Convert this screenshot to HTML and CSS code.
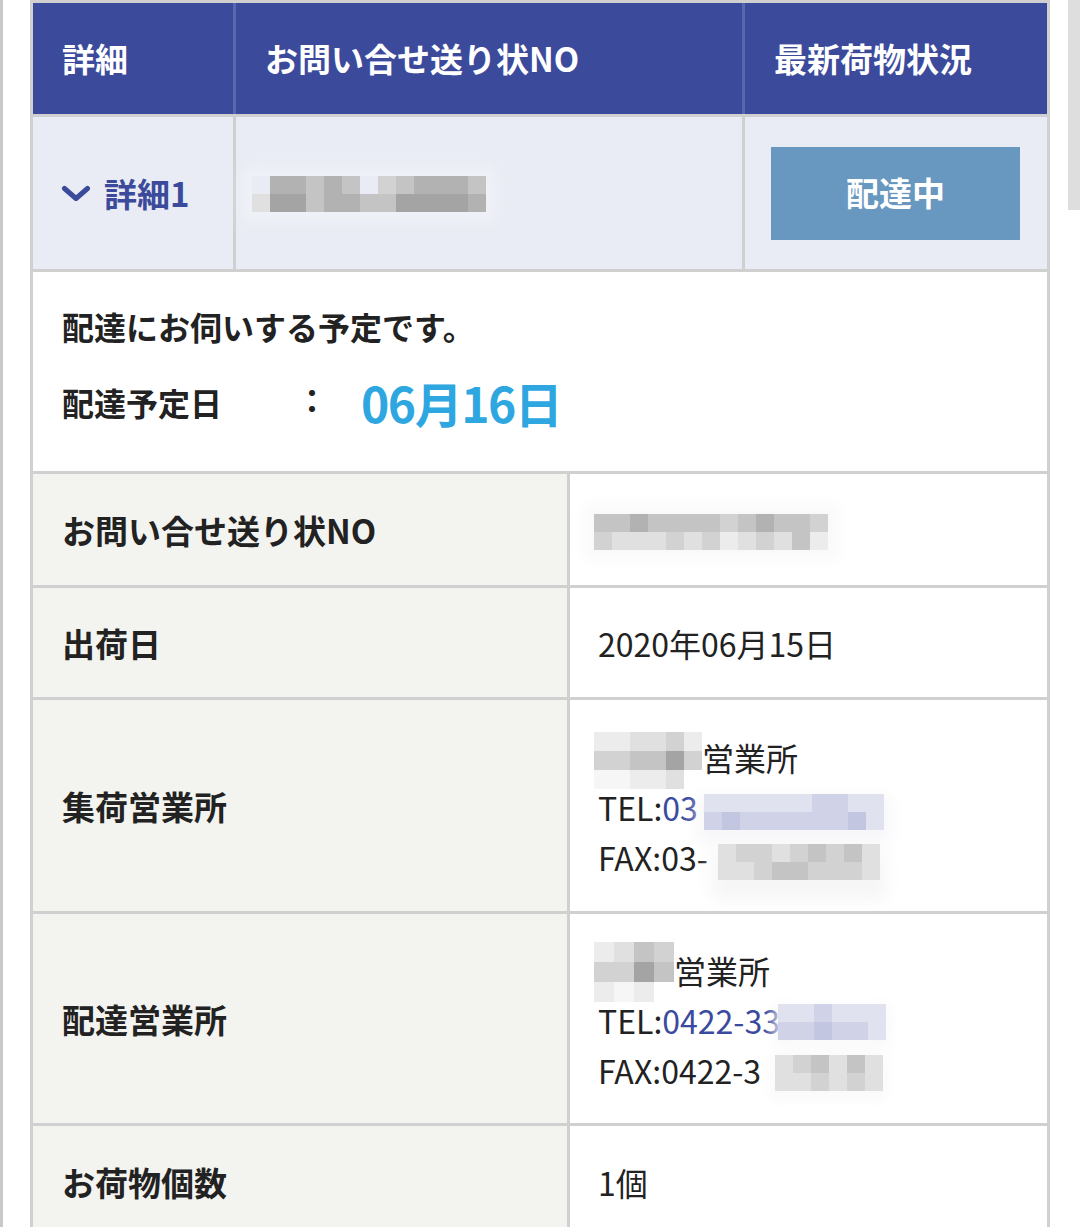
FILE: index.html
```html
<!DOCTYPE html>
<html lang="ja">
<head>
<meta charset="utf-8">
<title>お問い合せ</title>
<link rel="stylesheet" href="styles.css">
</head>
<body>
<div class="frame">
  <div class="sheet">
    <div class="head-row">
      <div class="th">詳細</div>
      <div class="th">お問い合せ送り状NO</div>
      <div class="th">最新荷物状況</div>
    </div>
    <div class="sum-row">
      <div class="td toggle">
        <svg class="chev" width="30" height="18" viewBox="0 0 30 18"><path d="M3.5 3.5 L15 13.5 L26.5 3.5" fill="none" stroke="#3c4a9c" stroke-width="5" stroke-linecap="round" stroke-linejoin="round"/></svg>
        <span class="toggle-label">詳細1</span>
      </div>
      <div class="td">
        <span class="mz mz-a">
          <i class="x"></i><i class="k3"></i><i class="k3"></i><i class="k4"></i><i class="k3"></i><i class="k4"></i><i class="x"></i><i class="k5"></i><i class="k4"></i><i class="k3"></i><i class="k3"></i><i class="k3"></i><i class="k4"></i>
          <i class="k6"></i><i class="k2"></i><i class="k2"></i><i class="k4"></i><i class="k3"></i><i class="k3"></i><i class="k4"></i><i class="k4"></i><i class="k2"></i><i class="k2"></i><i class="k2"></i><i class="k2"></i><i class="k3"></i>
        </span>
      </div>
      <div class="td status">
        <span class="badge">配達中</span>
      </div>
    </div>
    <div class="notice">
      <p class="notice-line">配達にお伺いする予定です。</p>
      <div class="eta">
        <span class="eta-label">配達予定日</span>
        <span class="eta-colon">：</span>
        <span class="eta-date">06月16日</span>
      </div>
    </div>
    <div class="d-row h111">
      <div class="lbl">お問い合せ送り状NO</div>
      <div class="val">
        <span class="mz mz-b">
          <i class="k4"></i><i class="k4"></i><i class="k3"></i><i class="k4"></i><i class="k4"></i><i class="k4"></i><i class="k4"></i><i class="k5"></i><i class="k4"></i><i class="k3"></i><i class="k4"></i><i class="k4"></i><i class="k5"></i>
          <i class="k5"></i><i class="k6"></i><i class="k6"></i><i class="k6"></i><i class="k5"></i><i class="k6"></i><i class="k5"></i><i class="k7"></i><i class="k6"></i><i class="k5"></i><i class="k6"></i><i class="k4"></i><i class="k7"></i>
        </span>
      </div>
    </div>
    <div class="d-row h109">
      <div class="lbl">出荷日</div>
      <div class="val">2020年06月15日</div>
    </div>
    <div class="d-row h211">
      <div class="lbl">集荷営業所</div>
      <div class="val lines">
        <div class="line"><span class="mz mz-c">
          <i class="k7"></i><i class="k7"></i><i class="k6"></i><i class="k6"></i><i class="k5"></i><i class="k7"></i>
          <i class="k5"></i><i class="k5"></i><i class="k4"></i><i class="k4"></i><i class="k2"></i><i class="k5"></i>
          <i class="k8"></i><i class="k8"></i><i class="k7"></i><i class="k7"></i><i class="k6"></i><i class="x"></i>
        </span>営業所</div>
        <div class="line">TEL:<a class="tel">03</a><span class="mz mz-d">
          <i class="b3"></i><i class="b3"></i><i class="b3"></i><i class="b3"></i><i class="b3"></i><i class="b3"></i><i class="b2"></i><i class="b2"></i><i class="b3"></i><i class="b3"></i>
          <i class="b2"></i><i class="b1"></i><i class="b2"></i><i class="b2"></i><i class="b2"></i><i class="b2"></i><i class="b2"></i><i class="b2"></i><i class="b1"></i><i class="b3"></i>
        </span></div>
        <div class="line">FAX:03-<span class="mz mz-e">
          <i class="k6"></i><i class="k5"></i><i class="k5"></i><i class="k6"></i><i class="k5"></i><i class="k4"></i><i class="k5"></i><i class="k4"></i><i class="k6"></i>
          <i class="k6"></i><i class="k6"></i><i class="k5"></i><i class="k4"></i><i class="k4"></i><i class="k5"></i><i class="k5"></i><i class="k5"></i><i class="k6"></i>
        </span></div>
      </div>
    </div>
    <div class="d-row h209">
      <div class="lbl">配達営業所</div>
      <div class="val lines">
        <div class="line"><span class="mz mz-f">
          <i class="k7"></i><i class="k6"></i><i class="k4"></i><i class="k5"></i>
          <i class="k5"></i><i class="k5"></i><i class="k2"></i><i class="k4"></i>
          <i class="k7"></i><i class="k8"></i><i class="k7"></i><i class="x"></i>
        </span>営業所</div>
        <div class="line">TEL:<a class="tel">0422-33</a><span class="mz mz-g">
          <i class="b3"></i><i class="b3"></i><i class="b2"></i><i class="b3"></i><i class="b3"></i><i class="b3"></i>
          <i class="b2"></i><i class="b2"></i><i class="b1"></i><i class="b2"></i><i class="b2"></i><i class="b3"></i>
        </span></div>
        <div class="line">FAX:0422-3<span class="mz mz-h">
          <i class="k6"></i><i class="k5"></i><i class="k4"></i><i class="k6"></i><i class="k4"></i><i class="k6"></i>
          <i class="k6"></i><i class="k6"></i><i class="k5"></i><i class="k6"></i><i class="k5"></i><i class="k6"></i>
        </span></div>
      </div>
    </div>
    <div class="d-row h111">
      <div class="lbl">お荷物個数</div>
      <div class="val">1個</div>
    </div>
  </div>
</div>
<div class="scrollbar"></div>
</body>
</html>
```

FILE: styles.css
```css
html, body {
  margin: 0;
  padding: 0;
  background: #ffffff;
}
body {
  font-family: "Noto Sans CJK JP", "Noto Sans", sans-serif;
  color: #222222;
  overflow: hidden;
}
.frame {
  border-left: 3px solid #c9c9c9;
  padding-left: 27px;
  min-height: 1227px;
  box-sizing: border-box;
}
.sheet {
  width: 1020px;
  box-sizing: border-box;
  background: #d0d0d0;
  padding: 3px;
  display: flex;
  flex-direction: column;
  gap: 3px;
}
.head-row, .sum-row {
  display: grid;
  grid-template-columns: 200px 506px 302px;
  gap: 3px;
}
.head-row {
  height: 111px;
  background: #5a67ad;
}
.sum-row {
  height: 152px;
}
.th {
  background: #3c4a9c;
  color: #ffffff;
  font-size: 33px;
  font-weight: 700;
  display: flex;
  align-items: center;
  padding-left: 29px;
  padding-bottom: 2px;
}
.td {
  background: #e9ecf4;
  display: flex;
  align-items: center;
  padding-left: 16px;
}
.toggle {
  padding-left: 28px;
  gap: 13px;
}
.chev {
  display: block;
  margin-top: 2px;
}
.toggle-label {
  color: #3c4a9c;
  font-size: 33px;
  font-weight: 700;
}
.status {
  padding: 0 27px 0 26px;
  justify-content: center;
}
.badge {
  width: 249px;
  height: 93px;
  background: #6897bf;
  color: #ffffff;
  font-size: 33px;
  font-weight: 700;
  display: flex;
  align-items: center;
  justify-content: center;
  padding-bottom: 2px;
  box-sizing: border-box;
}
.notice {
  height: 199px;
  background: #ffffff;
  box-sizing: border-box;
  padding: 30px 0 0 29px;
}
.notice-line {
  margin: 0;
  font-size: 32px;
  font-weight: 700;
  line-height: 48px;
}
.eta {
  display: flex;
  align-items: center;
  height: 62px;
  margin-top: 21px;
}
.eta-label {
  width: 234px;
  font-size: 32px;
  font-weight: 700;
}
.eta-colon {
  width: 32px;
  font-size: 32px;
  font-weight: 700;
  text-align: center;
  margin-bottom: 6px;
}
.eta-date {
  margin-left: 33px;
  font-size: 48px;
  font-weight: 700;
  color: #2ea7e0;
  letter-spacing: -1.5px;
}
.d-row {
  display: grid;
  grid-template-columns: 534px 477px;
  gap: 3px;
}
.h111 { height: 111px; }
.h109 { height: 109px; }
.h211 { height: 211px; }
.h209 { height: 209px; }
.lbl {
  background: #f3f3ef;
  display: flex;
  align-items: center;
  padding-left: 29px;
  font-size: 33px;
  font-weight: 700;
}
.val {
  background: #ffffff;
  display: flex;
  align-items: center;
  padding-left: 28px;
  font-size: 32px;
  font-weight: 400;
}
.val.lines {
  flex-direction: column;
  align-items: flex-start;
  justify-content: center;
  padding-top: 2px;
  box-sizing: border-box;
}
.line {
  line-height: 50px;
  height: 50px;
  display: flex;
  align-items: center;
  white-space: nowrap;
}
.tel {
  color: #3a4a9e;
  text-decoration: none;
}

/* mosaic blur blocks */
.mz {
  display: inline-grid;
  grid-auto-rows: 18px;
  flex: none;
}
.mz i {
  display: block;
}
.mz-a {
  grid-template-columns: repeat(13, 18px);
  margin-top: 2px;
  box-shadow: 0 0 14px 10px rgba(240, 242, 248, 0.8);
}
.mz-b {
  grid-template-columns: repeat(13, 18px);
  margin-left: -4px;
  margin-top: 4px;
  box-shadow: 0 0 14px 10px rgba(248, 248, 248, 0.9);
}
.mz-c {
  grid-template-columns: repeat(6, 18px);
  grid-auto-rows: 19px;
  margin-left: -4px;
  margin-top: 8px;
}
.mz-d {
  grid-template-columns: repeat(10, 18px);
  margin-left: 6px;
  margin-top: 10px;
  box-shadow: 0 8px 14px 6px rgba(246, 246, 250, 0.9);
}
.mz-e {
  grid-template-columns: repeat(9, 18px);
  margin-left: 10px;
  margin-top: 10px;
  box-shadow: 0 14px 16px 6px rgba(246, 246, 246, 0.95);
}
.mz-f {
  grid-template-columns: repeat(4, 20px);
  grid-auto-rows: 20px;
  margin-left: -4px;
  margin-top: 4px;
}
.mz-g {
  grid-template-columns: repeat(6, 18px);
  margin-left: -2px;
  margin-top: 4px;
  box-shadow: 0 4px 12px 4px rgba(248, 248, 248, 0.9);
}
.mz-h {
  grid-template-columns: repeat(6, 18px);
  margin-left: 14px;
  margin-top: 6px;
  box-shadow: 0 4px 12px 4px rgba(248, 248, 248, 0.9);
}
.x  { background: transparent; }
.k1 { background: #999999; }
.k2 { background: #a4a4a4; }
.k3 { background: #b2b2b2; }
.k4 { background: #c4c4c4; }
.k5 { background: #d2d2d2; }
.k6 { background: #e0e0e0; }
.k7 { background: #ececec; }
.k8 { background: #f6f6f6; }
.b1 { background: #c2c6e0; }
.b2 { background: #d0d3e8; }
.b3 { background: #e0e2f0; }

.scrollbar {
  position: fixed;
  top: 0;
  right: 0;
  width: 12px;
  height: 210px;
  background: #dedede;
}
```
